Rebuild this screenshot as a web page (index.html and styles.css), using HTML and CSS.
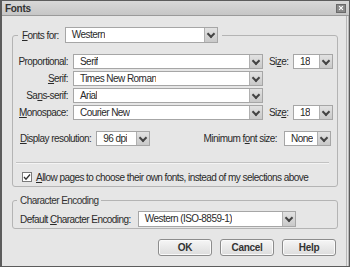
FILE: index.html
```html
<!DOCTYPE html>
<html>
<head>
<meta charset="utf-8">
<link rel="stylesheet" href="styles.css">
</head>
<body>
<div class="window">
  <div class="titlebar">
    <span class="title">Fonts</span>
    <span class="close"><svg width="8" height="8" viewBox="0 0 8 8"><path d="M1.5 1.5 L6.5 6.5 M6.5 1.5 L1.5 6.5" stroke="#fff" stroke-width="1.6"/></svg></span>
  </div>
  <div class="content">
    <fieldset class="group fonts">
      <legend class="legend1">
        <span class="lbl"><u>F</u>onts for:</span>
        <span class="select w-for"><span class="val">Western</span><span class="arrow"></span></span>
      </legend>
      <div class="grid">
        <span class="lbl right">Proportional:</span>
        <span class="select"><span class="val">Serif</span><span class="arrow"></span></span>
        <span class="lbl">Si<u>z</u>e:</span>
        <span class="select"><span class="val">18</span><span class="arrow"></span></span>

        <span class="lbl right"><u>S</u>erif:</span>
        <span class="select"><span class="val">Times New Roman</span><span class="arrow"></span></span>
        <span></span><span></span>

        <span class="lbl right">Sa<u>n</u>s-serif:</span>
        <span class="select"><span class="val">Arial</span><span class="arrow"></span></span>
        <span></span><span></span>

        <span class="lbl right"><u>M</u>onospace:</span>
        <span class="select"><span class="val">Courier New</span><span class="arrow"></span></span>
        <span class="lbl">Siz<u>e</u>:</span>
        <span class="select"><span class="val">18</span><span class="arrow"></span></span>
      </div>
      <div class="resrow">
        <span class="lbl"><u>D</u>isplay resolution:</span>
        <span class="select w-dpi"><span class="val">96 dpi</span><span class="arrow"></span></span>
        <span class="spacer"></span>
        <span class="lbl">Minimum f<u>o</u>nt size:</span>
        <span class="select w-min"><span class="val">None</span><span class="arrow"></span></span>
      </div>
      <div class="sep"></div>
      <div class="checkrow">
        <span class="check"><svg width="8" height="8" viewBox="0 0 8 8"><path d="M1 4 L3 6.2 L7 1.5" fill="none" stroke="#333" stroke-width="1.3"/></svg></span>
        <span class="lbl"><u>A</u>llow pages to choose their own fonts, instead of my selections above</span>
      </div>
    </fieldset>
    <fieldset class="group enc">
      <legend class="legend2">Character Encoding</legend>
      <div class="encrow">
        <span class="lbl">Default <u>C</u>haracter Encoding:</span>
        <span class="select w-enc"><span class="val">Western (ISO-8859-1)</span><span class="arrow"></span></span>
      </div>
    </fieldset>
    <div class="buttons">
      <button class="btn">OK</button>
      <button class="btn">Cancel</button>
      <button class="btn">Help</button>
    </div>
  </div>
</div>
</body>
</html>
```
FILE: styles.css
```css
* { box-sizing: border-box; }
html, body { margin: 0; padding: 0; background: #e4e4e4; }
body {
  font-family: "Liberation Sans", Arial, sans-serif;
  font-size: 10px;
  letter-spacing: -0.55px;
  color: #2a2a2a;
}
u { text-decoration: underline; text-underline-offset: 1px; }

.window {
  width: 350px;
  height: 267px;
  border: 1px solid #5c5c5c;
  border-left-width: 2px;
  background: #e6e6e6;
  display: flex;
  flex-direction: column;
}
.titlebar {
  height: 15px;
  flex: none;
  background: linear-gradient(#d8d8d8, #c6c6c6);
  border-bottom: 1px solid #9a9a9a;
  display: flex;
  align-items: center;
  justify-content: space-between;
  padding: 0 3px 0 3px;
}
.title { font-weight: bold; color: #333; font-size: 10px; letter-spacing: -0.3px; }
.close {
  width: 10px;
  height: 9px;
  background: #8a8a8a;
  border: 1px solid #6a6a6a;
  display: flex;
  align-items: center;
  justify-content: center;
}
.close svg { width: 6px; height: 6px; }

.content {
  flex: 1;
  padding: 11px 0 0 10px;
  border-right: 3px double #b8b8b8;
  display: flex;
  flex-direction: column;
}

.group {
  margin: 0;
  border: 1px solid #b4b4b4;
  border-radius: 3px;
  min-inline-size: 0;
}
.fonts {
  width: 326px;
  padding: 11px 3px 2px 5px;
}
.legend1 {
  padding: 0 4px;
  display: flex;
  align-items: center;
  gap: 6px;
  height: 16px;
}
.legend2 {
  padding: 0 3px;
  color: #333;
  height: 13px;
  line-height: 13px;
}

.lbl { white-space: nowrap; }
.right { text-align: right; }

.select {
  height: 15px;
  background: #fff;
  border: 1px solid #a6a6a6;
  display: flex;
  align-items: stretch;
  justify-content: space-between;
}
.val {
  padding-left: 6px;
  line-height: 13px;
  white-space: nowrap;
  overflow: hidden;
}
.arrow {
  width: 13px;
  flex: none;
  margin: 0;
  background: linear-gradient(#e2e2e2, #c9c9c9);
  border-left: 1px solid #b0b0b0;
  position: relative;
}
.arrow::after {
  content: "";
  position: absolute;
  left: 3px;
  top: 3px;
  width: 4px;
  height: 4px;
  border-right: 2px solid #444;
  border-bottom: 2px solid #444;
  transform: rotate(45deg);
}
.w-for { width: 153px; height: 16px; }

.grid {
  display: grid;
  grid-template-columns: 50px 190px 21px 39px;
  column-gap: 5px;
  row-gap: 2px;
  align-items: center;
}
.grid > :nth-child(4n+3) { margin-left: 1px; }
.grid > :nth-child(4n) { margin-left: -1px; }

.resrow {
  display: flex;
  align-items: center;
  margin-top: 11px;
  padding-left: 2px;
}
.resrow .lbl:first-child { margin-right: 5px; }
.w-dpi { width: 54px; }
.spacer { flex: 1; }
.w-min { width: 47px; margin-left: 7px; margin-right: 3px; }

.sep {
  height: 2px;
  margin: 16px 5px 0 -2px;
  border-top: 1px solid #c2c2c2;
  border-bottom: 1px solid #f4f4f4;
}
.checkrow {
  display: flex;
  align-items: center;
  gap: 4px;
  margin-top: 6px;
  height: 14px;
  padding-left: 4px;
}
.check {
  width: 10px;
  height: 10px;
  background: #fff;
  border: 1px solid #7a7a7a;
  display: flex;
  align-items: center;
  justify-content: center;
}

.enc {
  width: 326px;
  margin-top: 7px;
  padding: 4px 3px 1px 4px;
}
.encrow {
  display: flex;
  align-items: center;
  gap: 7px;
  padding-left: 3px;
}
.w-enc { width: 158px; height: 16px; }

.buttons {
  display: flex;
  justify-content: flex-end;
  gap: 8px;
  margin-top: 10px;
  padding-right: 10px;
}
.btn {
  width: 54px;
  height: 17px;
  padding: 0;
  font-family: "Liberation Sans", Arial, sans-serif;
  font-size: 10px;
  letter-spacing: -0.3px;
  font-weight: bold;
  color: #333;
  background: linear-gradient(#f6f6f6, #dcdcdc);
  border: 1px solid #8c8c8c;
  border-radius: 3px;
  box-shadow: inset 0 0 0 1px #fafafa;
}
```
